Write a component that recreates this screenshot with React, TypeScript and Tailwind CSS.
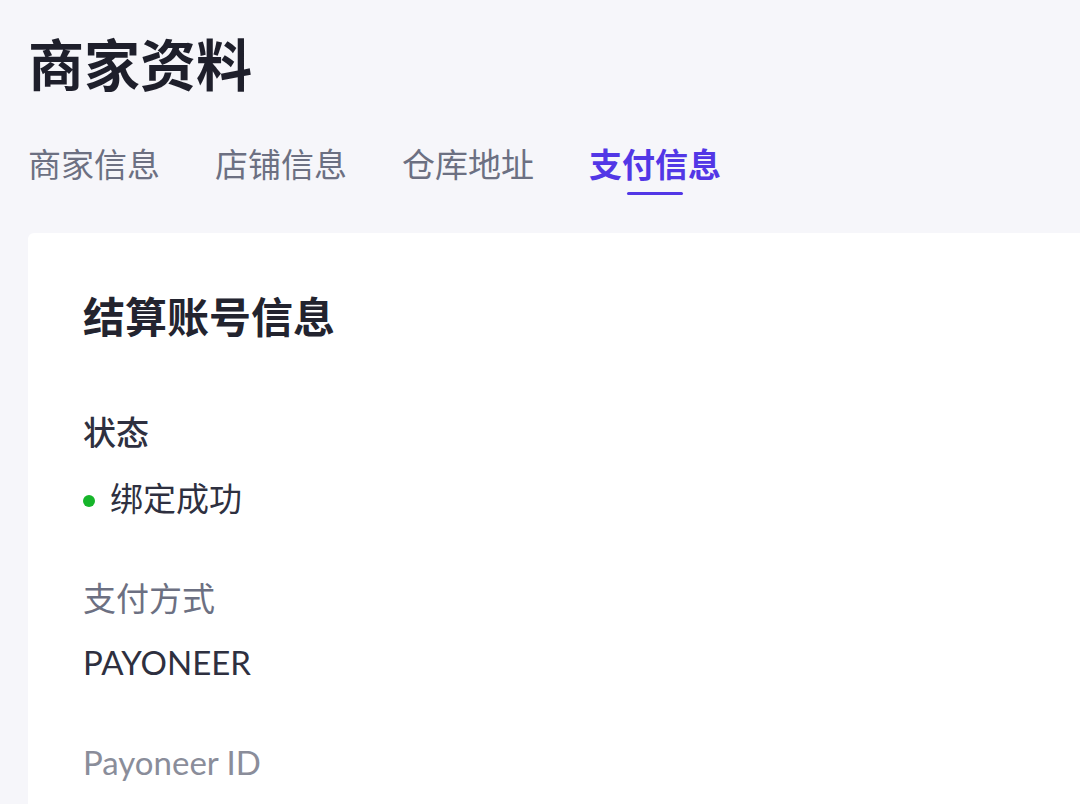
import React from "react";

const font = { fontFamily: 'Lato, "Noto Sans CJK SC", sans-serif' };

export default function App() {
  const tabs = ["商家信息", "店铺信息", "仓库地址", "支付信息"];
  return (
    <div className="w-[1080px] h-[804px] overflow-hidden bg-[#f6f6fa]" style={font}>
      <div className="pl-[28px] pt-[26px]">
        <h1 className="text-[56px] leading-[78px] font-bold text-[#1e1f2b]">商家资料</h1>
        <div className="mt-[38px] flex gap-[55px]">
          {tabs.map((t, i) => (
            <div key={t} className="flex flex-col items-center">
              <span
                className={
                  "text-[33px] leading-[44px] " +
                  (i === 3 ? "font-semibold text-[#5237e6]" : "text-[#6c7082]")
                }
              >
                {t}
              </span>
              <div className={"mt-[6px] h-[3px] w-[56px] rounded-full " + (i === 3 ? "bg-[#5237e6]" : "bg-transparent")} />
            </div>
          ))}
        </div>
        <div className="mt-[38px] bg-white rounded-tl-[6px] pl-[55px] pt-[55px] h-[600px]">
          <h2 className="text-[42px] leading-[58px] font-bold text-[#23242f]">结算账号信息</h2>
          <div className="mt-[64px] text-[33px] leading-[44px] font-medium text-[#2e3040]">状态</div>
          <div className="mt-[22px] flex items-center gap-[15px]">
            <span className="w-[12px] h-[12px] rounded-full bg-[#16b52a] mt-[6px]" />
            <span className="text-[33px] leading-[44px] text-[#2e3040]">绑定成功</span>
          </div>
          <div className="mt-[56px] text-[33px] leading-[44px] text-[#6c7082]">支付方式</div>
          <div className="mt-[20px] text-[33px] leading-[44px] text-[#2e3040]">PAYONEER</div>
          <div className="mt-[56px] text-[33px] leading-[44px] text-[#8a8d9a]">Payoneer ID</div>
        </div>
      </div>
    </div>
  );
}
